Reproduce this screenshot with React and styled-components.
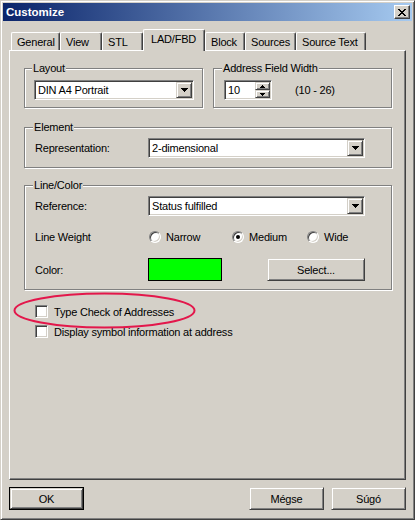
import React from 'react'
import styled, { createGlobalStyle } from 'styled-components'

const GlobalStyle = createGlobalStyle`
  body {
    margin: 0;
    background: #d4d0c8;
    font-family: "Liberation Sans", Arial, sans-serif;
    font-size: 11px;
    letter-spacing: -0.2px;
    color: #000;
  }
`

const Window = styled.div`
  width: 415px;
  height: 520px;
  box-sizing: border-box;
  background: #d4d0c8;
  border: 1px solid;
  border-color: #d4d0c8 #404040 #404040 #d4d0c8;
  box-shadow: inset 1px 1px #fff, inset -1px -1px #808080;
  padding: 2px;
  display: flex;
  flex-direction: column;
`

const TitleBar = styled.div`
  height: 18px;
  display: flex;
  align-items: center;
  justify-content: space-between;
  background: linear-gradient(to right, #0a246a, #a6caf0);
  padding: 0 2px 0 3px;
`

const Title = styled.span`
  color: #fff;
  font-weight: bold;
  font-size: 11.5px;
  letter-spacing: 0;
`

const CloseBtn = styled.div`
  width: 16px;
  height: 14px;
  box-sizing: border-box;
  background: #d4d0c8;
  border: 1px solid;
  border-color: #fff #404040 #404040 #fff;
  box-shadow: inset -1px -1px #808080;
  display: flex;
  align-items: center;
  justify-content: center;
`

const Body = styled.div`
  padding: 8px 6px 0 6px;
  display: flex;
  flex-direction: column;
`

const TabRow = styled.div`
  display: flex;
  align-items: flex-end;
  height: 21px;
  padding-left: 2px;
  position: relative;
  z-index: 1;
`

const Tab = styled.div`
  width: ${p => p.$w}px;
  height: ${p => (p.$active ? 22 : 18)}px;
  margin-bottom: ${p => (p.$active ? -1 : 0)}px;
  box-sizing: border-box;
  background: #d4d0c8;
  border-top: 1px solid #fff;
  border-left: 1px solid #fff;
  border-right: 1px solid #404040;
  box-shadow: inset -1px 0 #808080;
  border-radius: 2px 2px 0 0;
  padding: 0 0 ${p => (p.$active ? 3 : 0)}px ${p => (p.$active ? 7 : 5)}px;
  display: flex;
  align-items: center;
  white-space: nowrap;
`

const Panel = styled.div`
  height: 430px;
  box-sizing: border-box;
  border: 1px solid;
  border-color: #fff #404040 #404040 #fff;
  box-shadow: inset -1px -1px #808080;
  padding: 11px 13px 0 14px;
  position: relative;
  display: flex;
  flex-direction: column;
`

const GroupRow = styled.div`
  display: flex;
  gap: 10px;
`

const Group = styled.fieldset`
  margin: ${p => p.$mt || 0}px 0 0 0;
  width: ${p => (p.$w ? `${p.$w}px` : 'auto')};
  box-sizing: border-box;
  min-width: 0;
  border: 1px solid #808080;
  box-shadow: inset 1px 1px #fff, 1px 1px #fff;
  padding: ${p => p.$pt}px 9px ${p => p.$pb}px ${p => p.$pl || 9}px;
`

const Legend = styled.legend`
  margin-left: -2px;
  padding: 0 1px;
  line-height: 13px;
  background: #d4d0c8;
`

const FieldRow = styled.div`
  display: flex;
  align-items: center;
  height: ${p => p.$h}px;
  margin-top: ${p => p.$mt || 0}px;
`

const Label = styled.span`
  width: 113px;
  flex: none;
`

const Combo = styled.div`
  width: ${p => p.$w}px;
  height: 20px;
  box-sizing: border-box;
  border: 1px solid;
  border-color: #808080 #fff #fff #808080;
  box-shadow: inset 1px 1px #404040, inset -1px -1px #d4d0c8;
  background: #fff;
  padding: 1px;
  display: flex;
  align-items: center;
`

const ComboText = styled.span`
  flex: 1;
  padding-left: 2px;
  white-space: nowrap;
`

const RaisedBtn = styled.div`
  width: ${p => p.$w}px;
  height: ${p => p.$h}px;
  box-sizing: border-box;
  background: #d4d0c8;
  border: 1px solid;
  border-color: #d4d0c8 #404040 #404040 #d4d0c8;
  box-shadow: inset 1px 1px #fff, inset -1px -1px #808080;
  display: flex;
  align-items: center;
  justify-content: center;
  flex: none;
`

const SpinBox = styled(Combo)`
  width: 48px;
`

const SpinStack = styled.div`
  display: flex;
  flex-direction: column;
`

const RangeText = styled.span`
  margin-left: 23px;
`

const RadioItem = styled.div`
  width: ${p => (p.$w ? `${p.$w}px` : 'auto')};
  display: flex;
  align-items: center;
  gap: 5px;
  margin-left: ${p => p.$ml || 0}px;
`

const RadioCircle = styled.div`
  width: 12px;
  height: 12px;
  box-sizing: border-box;
  border-radius: 50%;
  border: 1px solid;
  border-color: #808080 #fff #fff #808080;
  box-shadow: inset 1px 1px #404040, inset -1px -1px #d4d0c8;
  background: #fff;
  display: flex;
  align-items: center;
  justify-content: center;

  &::after {
    content: '';
    width: 4px;
    height: 4px;
    border-radius: 50%;
    background: ${p => (p.$on ? '#000' : 'transparent')};
  }
`

const Swatch = styled.div`
  width: 74px;
  height: 23px;
  box-sizing: border-box;
  background: #00ff00;
  border: 1px solid #000;
  margin-right: 45px;
`

const CheckRow = styled.div`
  display: flex;
  align-items: center;
  gap: 6px;
  height: 13px;
  margin: ${p => p.$mt}px 0 0 11px;
`

const CheckBox = styled.div`
  width: 13px;
  height: 13px;
  box-sizing: border-box;
  border: 1px solid;
  border-color: #808080 #fff #fff #808080;
  box-shadow: inset 1px 1px #404040, inset -1px -1px #d4d0c8;
  background: #fff;
`

const Ellipse = styled.svg`
  position: absolute;
  left: 3px;
  top: 241px;
  pointer-events: none;
`

const ButtonRow = styled.div`
  display: flex;
  gap: 7px;
  margin-top: 7px;
`

const Spacer = styled.div`
  flex: 1;
`

const DefaultBtn = styled.div`
  width: 75px;
  height: 23px;
  box-sizing: border-box;
  border: 1px solid #000;
  display: flex;
`

const pixels = (rows) =>
  rows.flatMap((row, y) =>
    row.split('').map((c, x) => (c === '#' ? <rect key={`${x}-${y}`} x={x} y={y} width="1" height="1" /> : null))
  )

const CloseGlyph = () => (
  <svg width="8" height="7" fill="#000">
    {pixels(['##....##', '.##..##.', '..####..', '...##...', '..####..', '.##..##.', '##....##'])}
  </svg>
)

const DownArrow = () => (
  <svg width="7" height="4" fill="#000">
    {pixels(['#######', '.#####.', '..###..', '...#...'])}
  </svg>
)

const SmallUp = () => (
  <svg width="5" height="3" fill="#000">
    {pixels(['..#..', '.###.', '#####'])}
  </svg>
)

const SmallDown = () => (
  <svg width="5" height="3" fill="#000">
    {pixels(['#####', '.###.', '..#..'])}
  </svg>
)

const Dropdown = ({ w, children }) => (
  <Combo $w={w}>
    <ComboText>{children}</ComboText>
    <RaisedBtn $w={16} $h={16}>
      <DownArrow />
    </RaisedBtn>
  </Combo>
)

const tabs = [
  ['General', 49],
  ['View', 42],
  ['STL', 41],
  ['LAD/FBD', 62],
  ['Block', 40],
  ['Sources', 51],
  ['Source Text', 70],
]

export default function App() {
  return (
    <>
      <GlobalStyle />
      <Window>
        <TitleBar>
          <Title>Customize</Title>
          <CloseBtn>
            <CloseGlyph />
          </CloseBtn>
        </TitleBar>
        <Body>
          <TabRow>
            {tabs.map(([name, w]) => (
              <Tab key={name} $w={w} $active={name === 'LAD/FBD'}>
                {name}
              </Tab>
            ))}
          </TabRow>
          <Panel>
            <GroupRow>
              <Group $w={179} $pt={5} $pb={7}>
                <Legend>Layout</Legend>
                <Dropdown w={160}>DIN A4 Portrait</Dropdown>
              </Group>
              <Group $w={179} $pt={5} $pb={7} $pl={10}>
                <Legend>Address Field Width</Legend>
                <FieldRow $h={20}>
                  <SpinBox>
                    <ComboText>10</ComboText>
                    <SpinStack>
                      <RaisedBtn $w={15} $h={8}>
                        <SmallUp />
                      </RaisedBtn>
                      <RaisedBtn $w={15} $h={8}>
                        <SmallDown />
                      </RaisedBtn>
                    </SpinStack>
                  </SpinBox>
                  <RangeText>(10 - 26)</RangeText>
                </FieldRow>
              </Group>
            </GroupRow>

            <Group $mt={13} $pt={4} $pb={9} $pl={10}>
              <Legend>Element</Legend>
              <FieldRow $h={20}>
                <Label>Representation:</Label>
                <Dropdown w={217}>2-dimensional</Dropdown>
              </FieldRow>
            </Group>

            <Group $mt={11} $pt={4} $pb={8} $pl={10}>
              <Legend>Line/Color</Legend>
              <FieldRow $h={20}>
                <Label>Reference:</Label>
                <Dropdown w={217}>Status fulfilled</Dropdown>
              </FieldRow>
              <FieldRow $h={16} $mt={13}>
                <Label>Line Weight</Label>
                <RadioItem $w={83} $ml={1}>
                  <RadioCircle />
                  Narrow
                </RadioItem>
                <RadioItem $w={75}>
                  <RadioCircle $on />
                  Medium
                </RadioItem>
                <RadioItem>
                  <RadioCircle />
                  Wide
                </RadioItem>
              </FieldRow>
              <FieldRow $h={23} $mt={13}>
                <Label>Color:</Label>
                <Swatch />
                <RaisedBtn $w={98} $h={23}>Select...</RaisedBtn>
              </FieldRow>
            </Group>

            <CheckRow $mt={15}>
              <CheckBox />
              Type Check of Addresses
            </CheckRow>
            <CheckRow $mt={7}>
              <CheckBox />
              Display symbol information at address
            </CheckRow>

            <Ellipse width="183" height="37" viewBox="0 0 183 37">
              <ellipse cx="91.5" cy="18.5" rx="90" ry="17" fill="none" stroke="#e3174b" strokeWidth="2" />
            </Ellipse>
          </Panel>

          <ButtonRow>
            <DefaultBtn>
              <RaisedBtn $w={73} $h={21}>OK</RaisedBtn>
            </DefaultBtn>
            <Spacer />
            <RaisedBtn $w={75} $h={23}>Mégse</RaisedBtn>
            <RaisedBtn $w={75} $h={23}>Súgó</RaisedBtn>
          </ButtonRow>
        </Body>
      </Window>
    </>
  )
}
